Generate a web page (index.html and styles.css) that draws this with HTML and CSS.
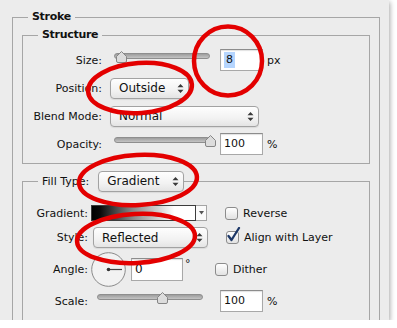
FILE: index.html
```html
<!DOCTYPE html>
<html lang="en">
<head>
  <meta charset="UTF-8" />
  <title>Layer Style - Stroke</title>
  <link rel="stylesheet" href="styles.css">
</head>
<body>
  <div class="dialog">
    <fieldset class="stroke">
      <legend>Stroke</legend>

      <fieldset class="structure">
        <legend>Structure</legend>

        <div class="row">
          <span class="lbl">Size:</span>
          <div class="slider short">
            <div class="track"></div>
            <svg class="thumb" style="left:2px" width="11" height="12" viewBox="0 0 11 12"><path d="M5.5 .5 L10.5 5.5 V10 Q10.5 11.5 9 11.5 H2 Q.5 11.5 .5 10 V5.5 Z"/></svg>
          </div>
          <span class="field"><span class="hilite">8</span></span>
          <span class="unit">px</span>
        </div>

        <div class="row">
          <span class="lbl">Position:</span>
          <div class="popup w-outside">Outside
            <svg class="arrows" width="7" height="11" viewBox="0 0 7 11"><path d="M3.5 1 L6.5 4.3 H.5 Z M.5 6.7 H6.5 L3.5 10 Z"/></svg>
          </div>
        </div>

        <div class="row">
          <span class="lbl">Blend Mode:</span>
          <div class="popup w-blend">Normal
            <svg class="arrows" width="7" height="11" viewBox="0 0 7 11"><path d="M3.5 1 L6.5 4.3 H.5 Z M.5 6.7 H6.5 L3.5 10 Z"/></svg>
          </div>
        </div>

        <div class="row">
          <span class="lbl">Opacity:</span>
          <div class="slider short">
            <div class="track"></div>
            <svg class="thumb" style="left:91px" width="11" height="12" viewBox="0 0 11 12"><path d="M5.5 .5 L10.5 5.5 V10 Q10.5 11.5 9 11.5 H2 Q.5 11.5 .5 10 V5.5 Z"/></svg>
          </div>
          <span class="field">100</span>
          <span class="unit">%</span>
        </div>
      </fieldset>

      <fieldset class="fill">
        <legend>
          <span>Fill Type:</span>
          <span class="popup w-gradient">Gradient
            <svg class="arrows" width="7" height="11" viewBox="0 0 7 11"><path d="M3.5 1 L6.5 4.3 H.5 Z M.5 6.7 H6.5 L3.5 10 Z"/></svg>
          </span>
        </legend>

        <div class="row grad-row">
          <span class="lbl">Gradient:</span>
          <span class="swatch"></span>
          <span class="swatch-btn"><svg width="5" height="4" viewBox="0 0 5 4"><path d="M0 0 H5 L2.5 3.5 Z"/></svg></span>
          <span class="check"></span>
          <span>Reverse</span>
        </div>

        <div class="row style-row">
          <span class="lbl">Style:</span>
          <div class="popup w-style">Reflected
            <svg class="arrows" width="7" height="11" viewBox="0 0 7 11"><path d="M3.5 1 L6.5 4.3 H.5 Z M.5 6.7 H6.5 L3.5 10 Z"/></svg>
          </div>
          <span class="check checked">
            <svg width="15" height="17" viewBox="0 0 15 17"><path d="M2.5 9 L5.5 13 L13 1"/></svg>
          </span>
          <span>Align with Layer</span>
        </div>

        <div class="row angle-row">
          <span class="lbl">Angle:</span>
          <svg class="dial" width="35" height="35" viewBox="0 0 35 35">
            <circle cx="17.5" cy="17.5" r="16.8"/>
            <line x1="17.5" y1="17.5" x2="31" y2="17.5"/>
            <circle class="dot" cx="17.5" cy="17.5" r="1.8"/>
          </svg>
          <span class="field wide">0</span>
          <span class="deg">°</span>
          <span class="check dither"></span>
          <span>Dither</span>
        </div>

        <div class="row scale-row">
          <span class="lbl">Scale:</span>
          <div class="slider long">
            <div class="track"></div>
            <svg class="thumb" style="left:60px" width="11" height="12" viewBox="0 0 11 12"><path d="M5.5 .5 L10.5 5.5 V10 Q10.5 11.5 9 11.5 H2 Q.5 11.5 .5 10 V5.5 Z"/></svg>
          </div>
          <span class="field">100</span>
          <span class="unit">%</span>
        </div>
      </fieldset>
    </fieldset>

    <!-- red marks drawn over the dialog -->
    <svg class="marks" width="397" height="328" viewBox="0 0 397 328">
      <ellipse cx="228" cy="61" rx="34" ry="34.5"/>
      <ellipse cx="140" cy="88" rx="52" ry="25" transform="rotate(-4 140 88)"/>
      <ellipse cx="138" cy="180" rx="59" ry="25" transform="rotate(-3 138 180)"/>
      <ellipse cx="136" cy="238.5" rx="59" ry="24.5" transform="rotate(-3 136 238.5)"/>
    </svg>
  </div>
</body>
</html>
```

FILE: styles.css
```css
body {
  margin: 0;
  background: #fff;
  font-family: "DejaVu Sans", Verdana, sans-serif;
  font-size: 11px;
  color: #111;
}
.dialog {
  position: relative;
  width: 389px;
  height: 320px;
  padding-top: 10px;
  box-sizing: border-box;
  background: #ececec;
  box-shadow: 1px 2px 5px rgba(0,0,0,0.35);
  overflow: hidden;
}
fieldset {
  margin: 0;
  padding: 0;
  border: 1px solid #a6a6a6;
  min-width: 0;
}
legend {
  margin-left: 15px;
  padding: 0 4px;
  font-weight: bold;
  line-height: 14px;
  letter-spacing: -0.3px;
}
.stroke {
  margin-left: 12px;
  width: 368px;
  box-sizing: border-box;
  padding-bottom: 40px;
}
.structure { margin: 4px 9px 0; padding: 7px 0 8px; }
.fill { margin: 7px 9px 0; padding: 0 0 30px; }
.fill legend {
  display: flex;
  align-items: center;
  gap: 9px;
  padding: 0 0 0 4px;
  font-weight: normal;
  letter-spacing: 0;
  line-height: 21px;
}

.row { display: flex; align-items: center; height: 22px; }
.structure .row + .row { margin-top: 6px; }
.structure .lbl { width: 79px; text-align: right; margin-right: 8px; }
.fill .lbl { width: 65px; text-align: right; }

/* sliders */
.slider { position: relative; height: 22px; }
.slider.short { width: 96px; margin-left: 4px; margin-right: 10px; }
.slider.long { width: 106px; margin-left: 9px; margin-right: 17px; }
.track {
  margin-top: 4px;
  height: 4px;
  border: 1px solid #8e8e8e;
  border-radius: 3px;
  background: linear-gradient(#9d9d9d, #c4c4c4);
}
.thumb { position: absolute; top: 2px; }
.thumb path { fill: #dcdcdc; stroke: #858585; }

/* text fields */
.field {
  width: 43px;
  height: 22px;
  box-sizing: border-box;
  padding: 0 0 0 3px;
  line-height: 20px;
  background: #fff;
  border: 1px solid #a8a8a8;
  border-top-color: #8c8c8c;
  box-shadow: inset 0 1px 1px rgba(0,0,0,0.12);
}
.field.wide { width: 52px; height: 23px; margin-left: 5px; line-height: 21px; font-size: 12px; }
.hilite { background: #b5d5fe; padding: 1px 2px 2px; }
.unit { margin-left: 4px; }

/* popup menus */
.popup {
  display: flex;
  align-items: center;
  height: 21px;
  box-sizing: border-box;
  padding-left: 8px;
  border: 1px solid #a2a2a2;
  border-radius: 4px;
  background: linear-gradient(#fefefe, #f2f2f2 60%, #e4e4e4);
  box-shadow: 0 1px 1px rgba(0,0,0,0.08);
  font-size: 12px;
}
.arrows { margin-left: auto; margin-right: 4px; }
.arrows path { fill: #3a3a3a; }
.w-outside { width: 79px; }
.w-blend { width: 149px; }
.w-gradient { width: 86px; }
.w-style { width: 115px; margin-left: 5px; }

/* fill type rows */
.grad-row { height: 18px; margin-top: 12px; }
.swatch {
  width: 105px;
  height: 16px;
  margin-left: 3px;
  box-sizing: border-box;
  border: 1px solid #3c3c3c;
  background: linear-gradient(to right, #000 0%, #0a0a0a 8%, #8a8a8a 40%, #fff 80%);
}
.swatch-btn {
  display: flex;
  align-items: center;
  justify-content: center;
  width: 11px;
  height: 16px;
  box-sizing: border-box;
  border: 1px solid #a4a4a4;
  border-left: none;
  background: #fafafa;
}
.swatch-btn path { fill: #555; }
.style-row { height: 21px; margin-top: 5px; }
.angle-row { height: 35px; margin-top: 4px; }
.scale-row { margin-top: 3px; }
.dial { margin-left: 3px; }
.dial circle { fill: #f2f2f2; stroke: #8a8a8a; }
.dial line { stroke: #444; stroke-width: 1.2; }
.dial .dot { fill: #333; stroke: none; }
.deg { width: 32px; padding-left: 2px; box-sizing: border-box; align-self: flex-start; margin-top: 5px; }

/* checkboxes */
.check {
  position: relative;
  width: 13px;
  height: 13px;
  box-sizing: border-box;
  margin-left: 18px;
  margin-right: 5px;
  border: 1px solid #8c8c8c;
  border-radius: 3px;
  background: linear-gradient(#fff, #e2e2e2);
}
.check.dither { margin-left: 0; }
.check svg { position: absolute; left: -1px; top: -5px; }
.check svg path { fill: none; stroke: #1d3868; stroke-width: 2.3; stroke-linecap: round; stroke-linejoin: round; }

.marks { position: absolute; left: 0; top: 0; pointer-events: none; }
.marks ellipse { fill: none; stroke: #e30000; stroke-width: 4.5; }
```
